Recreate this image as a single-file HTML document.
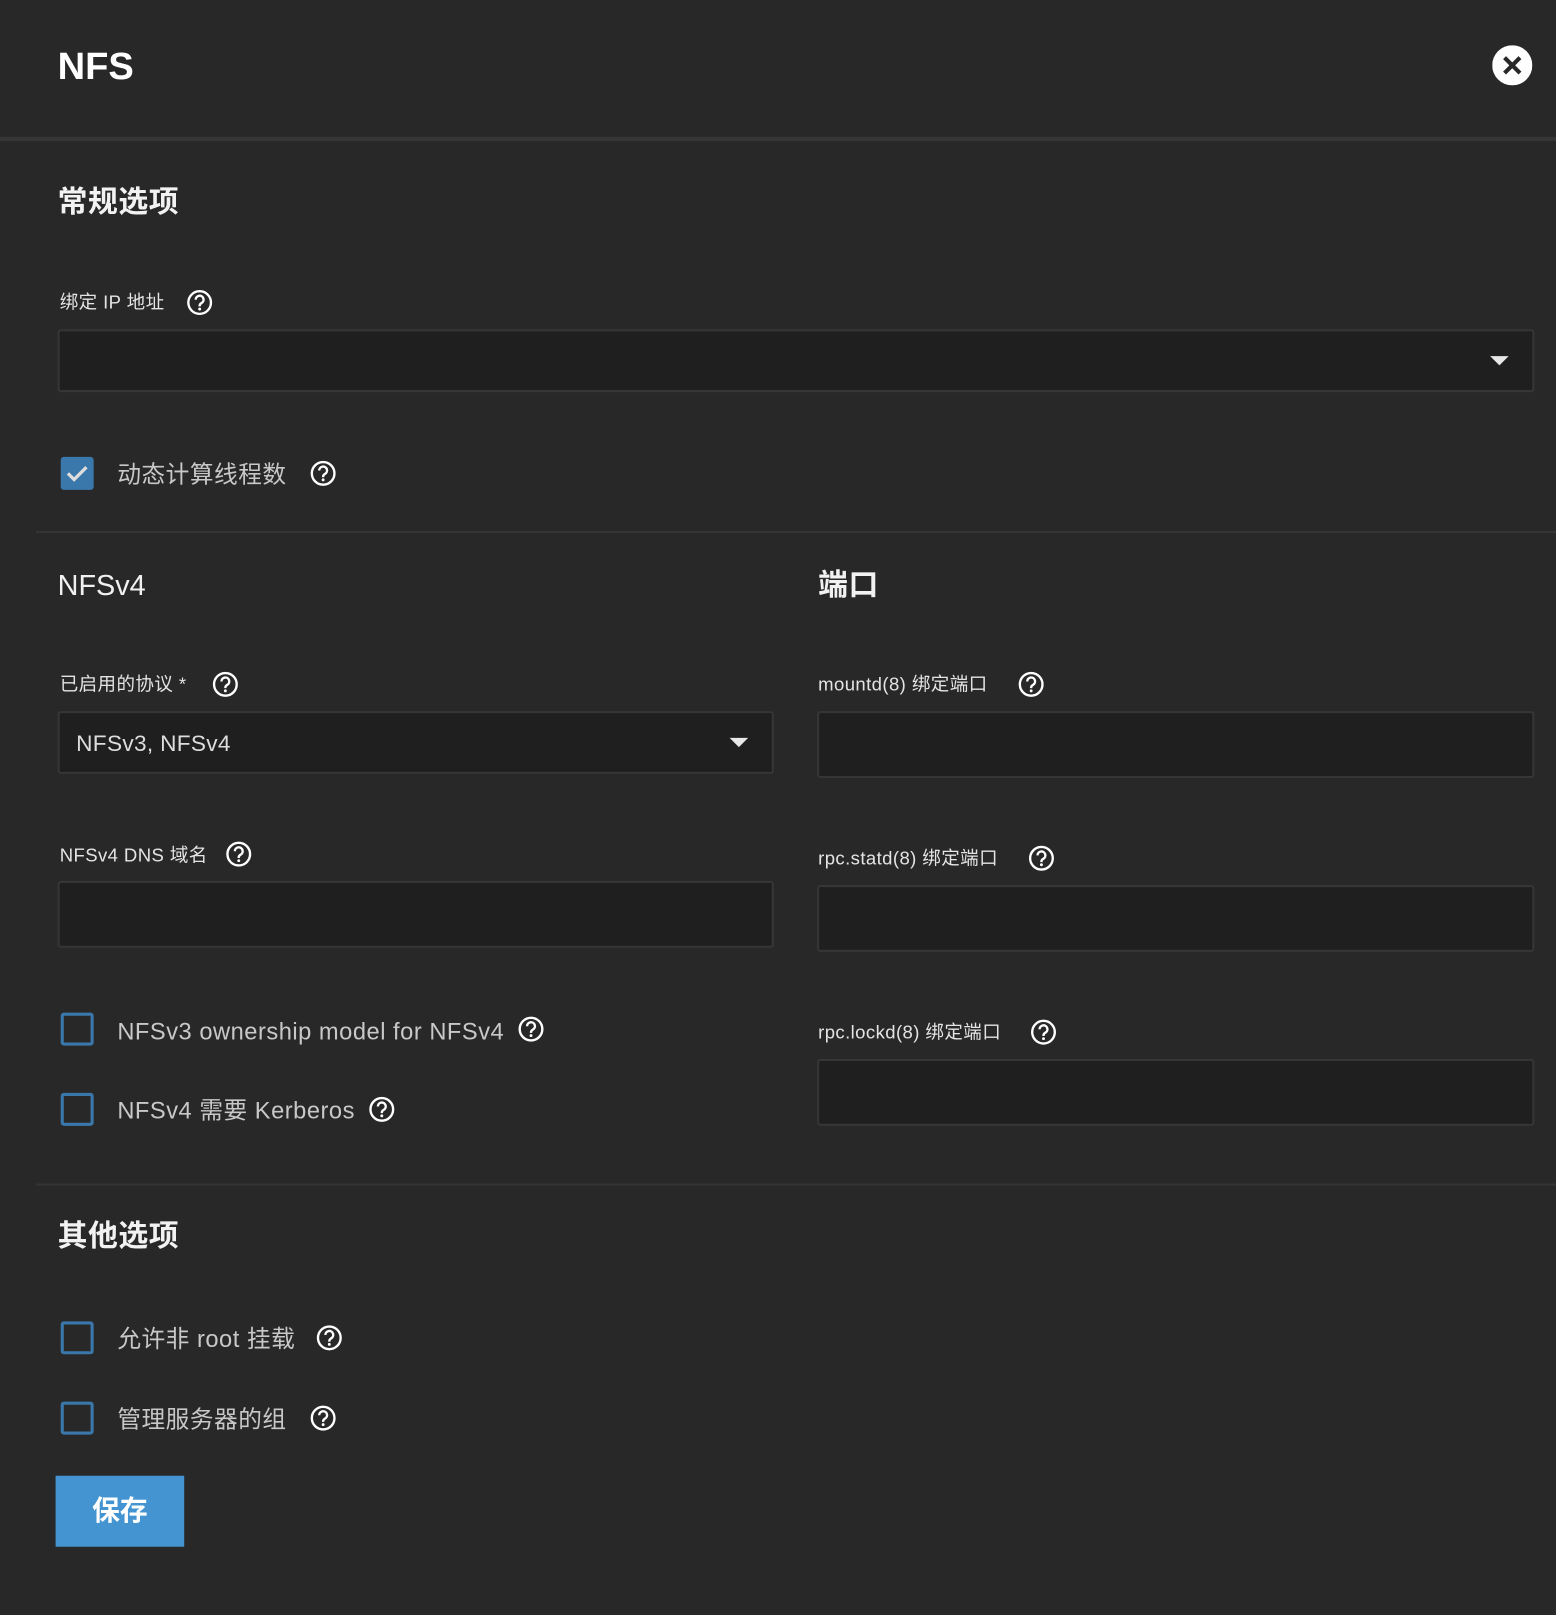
<!DOCTYPE html>
<html><head><meta charset="utf-8"><style>
html,body{margin:0;padding:0;background:#282828;width:1556px;height:1614px;overflow:hidden}
#w{position:absolute;left:0;top:0;width:1512px;height:1569px;transform:scale(1.0291);transform-origin:0 0;font-family:"Liberation Sans","Noto Sans CJK SC",sans-serif;color:#ddd}
.a{position:absolute;white-space:nowrap}
.lbl{font-size:18px;color:#e4e4e4;line-height:24px;letter-spacing:0.4px}
.h{font-size:29px;font-weight:bold;color:#f2f2f2;line-height:36px;letter-spacing:0.5px}
.box{position:absolute;background:#1f1f1f;border:2px solid #363636;border-radius:3px;box-sizing:border-box}
.cb{position:absolute;width:32px;height:32px;box-sizing:border-box;border:3px solid #3a78ac;border-radius:3px}
.ct{font-size:23px;color:#c8c8c8;line-height:32px;letter-spacing:0.5px}
.q{position:absolute;width:26px;height:26px}
.div{position:absolute;left:35px;right:0;height:2px;background:#353535}
.arr{position:absolute;width:0;height:0;border-left:9px solid transparent;border-right:9px solid transparent;border-top:9px solid #e8e8e8}
</style></head><body><div id="w">
<svg width="0" height="0" style="position:absolute"><defs><g id="q"><circle cx="13" cy="13" r="11" fill="none" stroke="#fff" stroke-width="2.3"/><path d="M9.2 10.2a3.8 3.8 0 1 1 5.6 3.3c-1.2.7-1.8 1.3-1.8 2.6v.6" fill="none" stroke="#fff" stroke-width="2.3"/><circle cx="13" cy="19.3" r="1.4" fill="#fff"/></g></defs></svg>
<div class="a" style="left:56px;top:43px;font-size:37px;font-weight:bold;color:#fff;line-height:44px">NFS</div>
<svg class="a" style="left:1450px;top:44px" width="39" height="39"><circle cx="19.5" cy="19.5" r="19.5" fill="#fff"/><path d="M12 12L27 27M27 12L12 27" stroke="#282828" stroke-width="4"/></svg>
<div class="a" style="left:0;top:133px;width:1512px;height:4px;background:#363636"></div>

<div class="a h" style="left:56px;top:179px">常规选项</div>
<div class="a lbl" style="left:58px;top:282px">绑定 IP 地址</div>
<svg class="q" style="left:181px;top:281px"><use href="#q"/></svg>
<div class="box" style="left:56px;top:320px;width:1435px;height:61px"></div>
<div class="arr" style="left:1448px;top:346px"></div>
<div class="cb" style="left:59px;top:444px;background:#3a78ac"></div>
<svg class="a" style="left:59px;top:444px" width="32" height="32"><path d="M7 16l6 6 12-12" fill="none" stroke="#ddd" stroke-width="3.2"/></svg>
<div class="a ct" style="left:114px;top:445px">动态计算线程数</div>
<svg class="q" style="left:301px;top:447px"><use href="#q"/></svg>
<div class="div" style="top:516px"></div>

<div class="a" style="left:56px;top:551px;font-size:28px;color:#f0f0f0;line-height:36px">NFSv4</div>
<div class="a h" style="left:795px;top:551px">端口</div>

<div class="a lbl" style="left:58px;top:653px">已启用的协议 *</div>
<svg class="q" style="left:206px;top:652px"><use href="#q"/></svg>
<div class="box" style="left:56px;top:691px;width:696px;height:61px"></div>
<div class="a" style="left:74px;top:709px;font-size:22px;color:#ddd;line-height:28px;letter-spacing:0.3px">NFSv3, NFSv4</div>
<div class="arr" style="left:709px;top:717px"></div>

<div class="a lbl" style="left:58px;top:819px">NFSv4 DNS 域名</div>
<svg class="q" style="left:219px;top:817px"><use href="#q"/></svg>
<div class="box" style="left:56px;top:856px;width:696px;height:65px"></div>

<div class="cb" style="left:59px;top:984px"></div>
<div class="a ct" style="left:114px;top:986px">NFSv3 ownership model for NFSv4</div>
<svg class="q" style="left:503px;top:987px"><use href="#q"/></svg>
<div class="cb" style="left:59px;top:1062px"></div>
<div class="a ct" style="left:114px;top:1063px">NFSv4 需要 Kerberos</div>
<svg class="q" style="left:358px;top:1065px"><use href="#q"/></svg>

<div class="a lbl" style="left:795px;top:653px">mountd(8) 绑定端口</div>
<svg class="q" style="left:989px;top:652px"><use href="#q"/></svg>
<div class="box" style="left:794px;top:691px;width:697px;height:65px"></div>
<div class="a lbl" style="left:795px;top:822px">rpc.statd(8) 绑定端口</div>
<svg class="q" style="left:999px;top:821px"><use href="#q"/></svg>
<div class="box" style="left:794px;top:860px;width:697px;height:65px"></div>
<div class="a lbl" style="left:795px;top:991px">rpc.lockd(8) 绑定端口</div>
<svg class="q" style="left:1001px;top:990px"><use href="#q"/></svg>
<div class="box" style="left:794px;top:1029px;width:697px;height:65px"></div>

<div class="div" style="top:1150px"></div>
<div class="a h" style="left:56px;top:1184px">其他选项</div>
<div class="cb" style="left:59px;top:1284px"></div>
<div class="a ct" style="left:114px;top:1285px">允许非 root 挂载</div>
<svg class="q" style="left:307px;top:1287px"><use href="#q"/></svg>
<div class="cb" style="left:59px;top:1362px"></div>
<div class="a ct" style="left:114px;top:1363px">管理服务器的组</div>
<svg class="q" style="left:301px;top:1365px"><use href="#q"/></svg>

<div class="a" style="left:54px;top:1434px;width:125px;height:69px;background:#4394d1;color:#fff;font-size:27px;font-weight:bold;text-align:center;line-height:69px">保存</div>
</div></body></html>
